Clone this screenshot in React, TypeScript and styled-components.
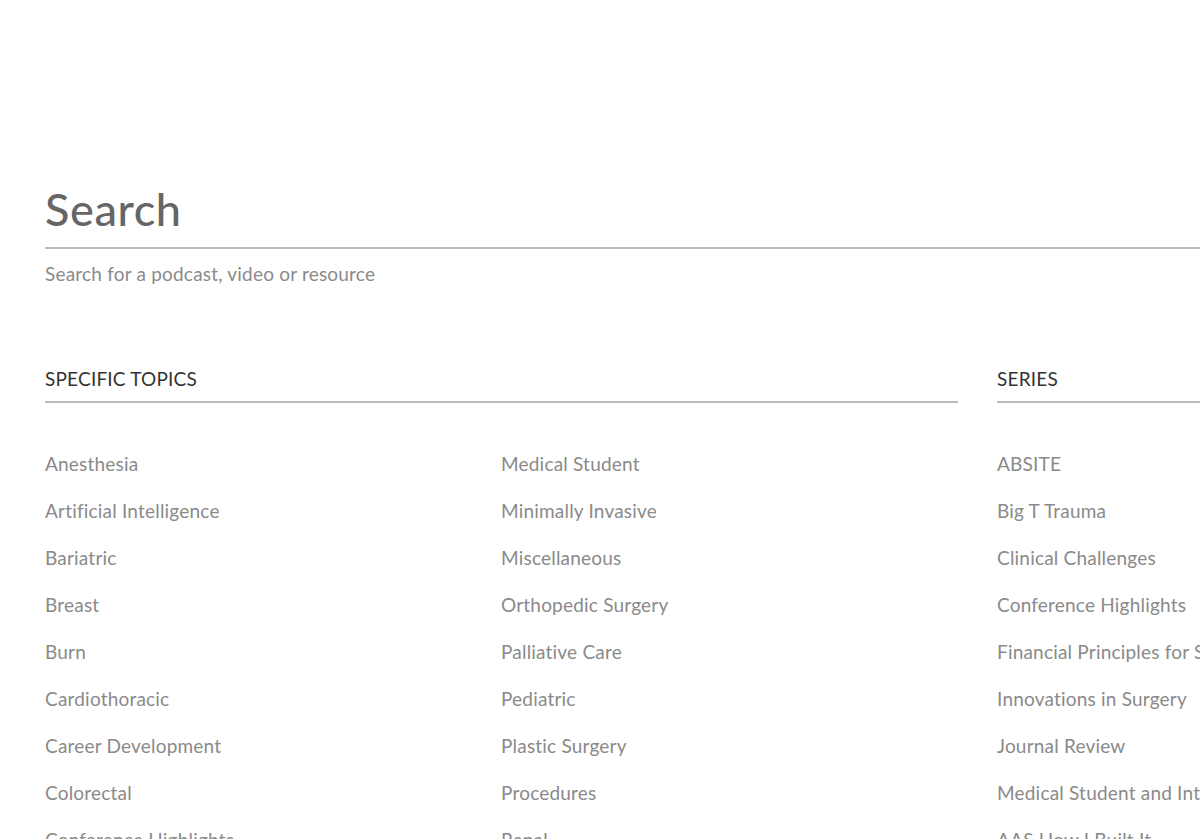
import React from 'react';
import styled, { createGlobalStyle } from 'styled-components';

const topics = [
  'Anesthesia', 'Artificial Intelligence', 'Bariatric', 'Breast', 'Burn', 'Cardiothoracic',
  'Career Development', 'Colorectal', 'Conference Highlights', 'Critical Care', 'Endocrine',
  'Global Surgery', 'Hepatobiliary',
  'Medical Student', 'Minimally Invasive', 'Miscellaneous', 'Orthopedic Surgery', 'Palliative Care',
  'Pediatric', 'Plastic Surgery', 'Procedures', 'Renal', 'Research', 'Surgical Oncology',
  'Transplant', 'Vascular',
]

const series = [
  'ABSITE', 'Big T Trauma', 'Clinical Challenges', 'Conference Highlights',
  'Financial Principles for Surgeons', 'Innovations in Surgery', 'Journal Review',
  'Medical Student and Intern', 'AAS How I Built It', 'Surgical Education',
]

const GlobalStyle = createGlobalStyle`
  html, body {
    margin: 0;
    background: #fff;
    overflow: hidden;
  }
  body {
    font-family: Lato, "Liberation Sans", sans-serif;
  }
`

const App = () => {
  return (
    <>
      <GlobalStyle />
      <Wrapper>
        <SearchBlock>
          <Title>Search</Title>
          <SearchInput placeholder='Search for a podcast, video or resource' />
        </SearchBlock>
        <Columns>
          <Section>
            <SectionTitle>Specific Topics</SectionTitle>
            <List rows={13}>
              {topics.map((t, i) => <Item key={i}>{t}</Item>)}
            </List>
          </Section>
          <Section>
            <SectionTitle>Series</SectionTitle>
            <List rows={10}>
              {series.map((s, i) => <Item key={i}>{s}</Item>)}
            </List>
          </Section>
        </Columns>
      </Wrapper>
    </>
  );
};

const Wrapper = styled.main`
  width: 1420px;
  padding: 183px 0 0 45px;
  box-sizing: border-box;
`
const SearchBlock = styled.section`
  display: flex;
  flex-direction: column;
`
const Title = styled.h1`
  margin: 0;
  font-size: 45px;
  line-height: 52px;
  font-weight: 500;
  letter-spacing: 0.6px;
  color: #666;
  padding-bottom: 12px;
  border-bottom: 2px solid #bbb;
`
const SearchInput = styled.input`
  border: none;
  outline: none;
  padding: 0;
  margin-top: 14px;
  font-family: inherit;
  font-size: 19px;
  letter-spacing: 0.2px;
  line-height: 22px;
  color: #666;
  background: transparent;
  &::placeholder {
    color: #8a8a8a;
  }
`
const Columns = styled.div`
  display: grid;
  grid-template-columns: 913px 1fr;
  column-gap: 39px;
  margin-top: 82px;
`
const Section = styled.section`
  display: flex;
  flex-direction: column;
`
const SectionTitle = styled.h2`
  margin: 0;
  font-size: 19px;
  letter-spacing: 0.2px;
  line-height: 23px;
  font-weight: 400;
  text-transform: uppercase;
  color: #333;
  padding-bottom: 11px;
  border-bottom: 2px solid #bbb;
`
const List = styled.ul<{ rows: number }>`
  list-style: none;
  margin: 47px 0 0;
  padding: 0;
  display: grid;
  grid-auto-flow: column;
  grid-template-rows: repeat(${props => props.rows}, 27px);
  grid-auto-columns: 456px;
  row-gap: 20px;
`
const Item = styled.li`
  font-size: 19px;
  letter-spacing: 0.2px;
  line-height: 27px;
  color: #8a8a8a;
  white-space: nowrap;
`

export default App;
